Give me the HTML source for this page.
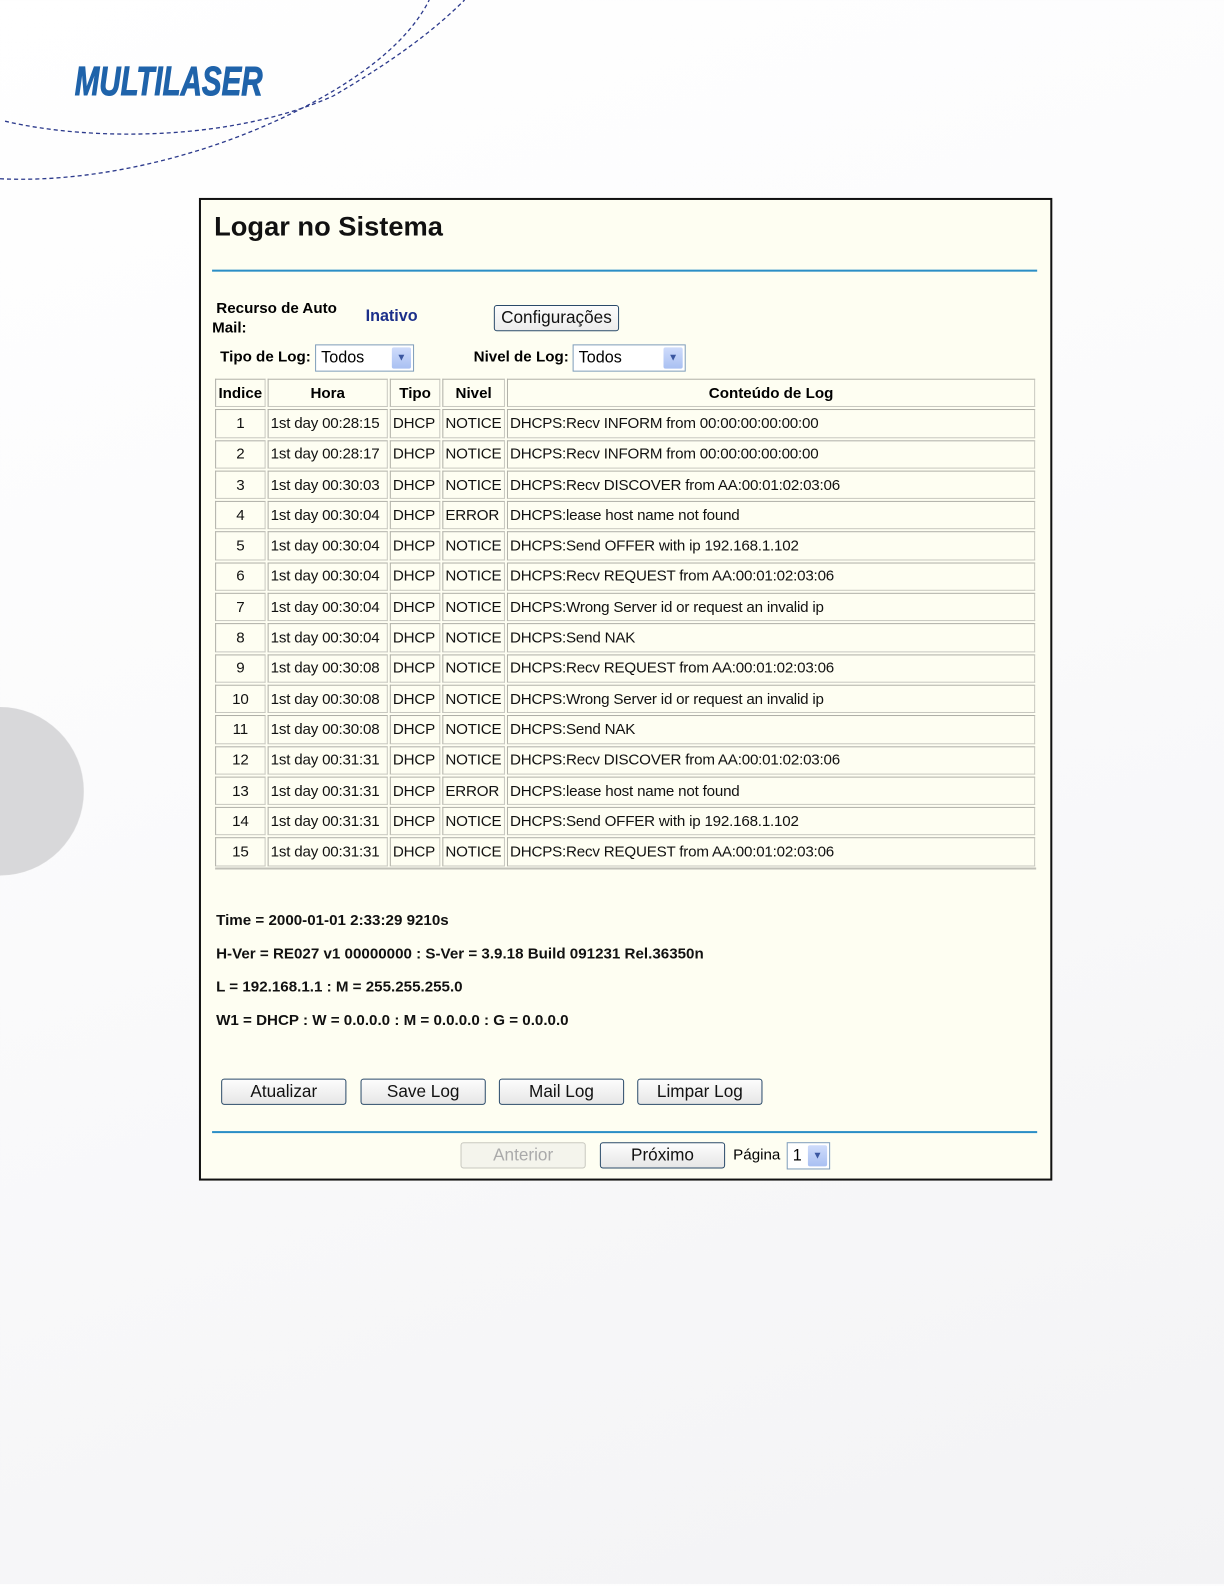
<!DOCTYPE html>
<html><head><meta charset="utf-8"><style>
*{margin:0;padding:0;box-sizing:border-box}
body{width:1224px;height:1584px;position:relative;overflow:hidden;font-family:"Liberation Sans",Arial,sans-serif;background:linear-gradient(160deg,#ffffff 0%,#fbfbfc 40%,#f3f3f5 100%)}
#w{position:absolute;left:0;top:0;width:1212px;height:1570px;transform:scale(1.0099);transform-origin:0 0}
.abs{position:absolute}
.panel{left:197px;top:196px;width:845px;height:973px;border:2px solid #111;background:#fefef2}
.hr{height:2px;background:#2b8ec6;left:210px;width:817px}
.btn{position:absolute;height:26px;border:1px solid #2a4a6a;border-radius:3px;background:linear-gradient(#fdfdfd,#e6e6e6);font-size:17px;text-align:center;line-height:24px;color:#111}
.sel{position:absolute;height:27px;border:1px solid #7f9db9;background:#fff;font-size:16px;line-height:25px;padding-left:5px}
.sel i{position:absolute;right:2px;top:2px;width:19px;height:21px;background:linear-gradient(#cfdcfb,#a9c0f2);border-radius:2px;color:#3b57a0;font-style:normal;font-size:10px;text-align:center;line-height:21px}
table{position:absolute;left:211px;top:373px;width:816px;border-collapse:separate;border-spacing:2px;table-layout:fixed;font-size:15px}
td{height:28.3px;border:1px solid #c8c8c0;border-top-color:#b0b0a8;border-left-color:#b0b0a8;padding:0 2px;white-space:nowrap;color:#111;letter-spacing:-0.2px}
th{height:28.3px;border:1px solid #c8c8c0;border-top-color:#b0b0a8;border-left-color:#b0b0a8;font-size:15px;font-weight:bold}
td.c{text-align:center}
.info{left:214px;font-size:15px;font-weight:bold;color:#111}
</style></head><body><div id="w">
<svg class="abs" style="left:0;top:0" width="480" height="200">
<path d="M5 120 C90 140 230 140 330 95 C390 60 430 30 460 0" fill="none" stroke="#2c3a8c" stroke-width="1.3" stroke-dasharray="4 3"/>
<path d="M0 177 C100 182 230 150 330 90 C380 60 410 30 425 0" fill="none" stroke="#2c3a8c" stroke-width="1.3" stroke-dasharray="4 3"/>
<text x="74" y="94" font-family="Liberation Sans" font-weight="bold" font-style="italic" font-size="40" fill="#1f63aa" stroke="#1f63aa" stroke-width="1" textLength="186" lengthAdjust="spacingAndGlyphs">MULTILASER</text>
</svg>
<div class="abs" style="left:-84px;top:700px;width:167px;height:167px;border-radius:50%;background:#d8d8da"></div>
<div class="abs panel"></div>
<div class="abs" style="left:212px;top:209px;font-size:27px;font-weight:bold;color:#111">Logar no Sistema</div>
<div class="abs hr" style="top:267px"></div>
<div class="abs" style="left:210px;top:296px;font-size:15px;font-weight:bold;line-height:19px">&nbsp;Recurso de Auto<br>Mail:</div>
<div class="abs" style="left:362px;top:305px;font-size:16px;font-weight:bold;color:#1b2f8a">Inativo</div>
<div class="btn" style="left:489px;top:302px;width:124px;background:linear-gradient(#fcfcfc,#ececec)">Configurações</div>
<div class="abs" style="left:218px;top:345px;font-size:15px;font-weight:bold">Tipo de Log:</div>
<div class="sel" style="left:312px;top:341px;width:98px">Todos<i>&#9660;</i></div>
<div class="abs" style="left:469px;top:345px;font-size:15px;font-weight:bold">Nivel de Log:</div>
<div class="sel" style="left:567px;top:341px;width:112px">Todos<i>&#9660;</i></div>
<table>
<colgroup><col style="width:50px"><col style="width:119px"><col style="width:50px"><col style="width:62px"><col></colgroup>
<tr><th>Indice</th><th>Hora</th><th>Tipo</th><th>Nivel</th><th>Conteúdo de Log</th></tr>
<tr><td class="c">1</td><td>1st day 00:28:15</td><td>DHCP</td><td>NOTICE</td><td>DHCPS:Recv INFORM from 00:00:00:00:00:00</td></tr>
<tr><td class="c">2</td><td>1st day 00:28:17</td><td>DHCP</td><td>NOTICE</td><td>DHCPS:Recv INFORM from 00:00:00:00:00:00</td></tr>
<tr><td class="c">3</td><td>1st day 00:30:03</td><td>DHCP</td><td>NOTICE</td><td>DHCPS:Recv DISCOVER from AA:00:01:02:03:06</td></tr>
<tr><td class="c">4</td><td>1st day 00:30:04</td><td>DHCP</td><td>ERROR</td><td>DHCPS:lease host name not found</td></tr>
<tr><td class="c">5</td><td>1st day 00:30:04</td><td>DHCP</td><td>NOTICE</td><td>DHCPS:Send OFFER with ip 192.168.1.102</td></tr>
<tr><td class="c">6</td><td>1st day 00:30:04</td><td>DHCP</td><td>NOTICE</td><td>DHCPS:Recv REQUEST from AA:00:01:02:03:06</td></tr>
<tr><td class="c">7</td><td>1st day 00:30:04</td><td>DHCP</td><td>NOTICE</td><td>DHCPS:Wrong Server id or request an invalid ip</td></tr>
<tr><td class="c">8</td><td>1st day 00:30:04</td><td>DHCP</td><td>NOTICE</td><td>DHCPS:Send NAK</td></tr>
<tr><td class="c">9</td><td>1st day 00:30:08</td><td>DHCP</td><td>NOTICE</td><td>DHCPS:Recv REQUEST from AA:00:01:02:03:06</td></tr>
<tr><td class="c">10</td><td>1st day 00:30:08</td><td>DHCP</td><td>NOTICE</td><td>DHCPS:Wrong Server id or request an invalid ip</td></tr>
<tr><td class="c">11</td><td>1st day 00:30:08</td><td>DHCP</td><td>NOTICE</td><td>DHCPS:Send NAK</td></tr>
<tr><td class="c">12</td><td>1st day 00:31:31</td><td>DHCP</td><td>NOTICE</td><td>DHCPS:Recv DISCOVER from AA:00:01:02:03:06</td></tr>
<tr><td class="c">13</td><td>1st day 00:31:31</td><td>DHCP</td><td>ERROR</td><td>DHCPS:lease host name not found</td></tr>
<tr><td class="c">14</td><td>1st day 00:31:31</td><td>DHCP</td><td>NOTICE</td><td>DHCPS:Send OFFER with ip 192.168.1.102</td></tr>
<tr><td class="c">15</td><td>1st day 00:31:31</td><td>DHCP</td><td>NOTICE</td><td>DHCPS:Recv REQUEST from AA:00:01:02:03:06</td></tr>
</table>
<div class="abs" style="left:213px;top:859px;width:813px;height:2px;background:#c0c0b8"></div>
<div class="abs info" style="top:903px">Time = 2000-01-01 2:33:29 9210s</div>
<div class="abs info" style="top:936px">H-Ver = RE027 v1 00000000 : S-Ver = 3.9.18 Build 091231 Rel.36350n</div>
<div class="abs info" style="top:969px">L = 192.168.1.1 : M = 255.255.255.0</div>
<div class="abs info" style="top:1002px">W1 = DHCP : W = 0.0.0.0 : M = 0.0.0.0 : G = 0.0.0.0</div>
<div class="btn" style="left:219px;top:1068px;width:124px">Atualizar</div>
<div class="btn" style="left:357px;top:1068px;width:124px">Save Log</div>
<div class="btn" style="left:494px;top:1068px;width:124px">Mail Log</div>
<div class="btn" style="left:631px;top:1068px;width:124px">Limpar Log</div>
<div class="abs hr" style="top:1120px"></div>
<div class="btn" style="left:456px;top:1131px;width:124px;border-color:#c8c8c0;color:#aaa;background:#f4f4ec">Anterior</div>
<div class="btn" style="left:594px;top:1131px;width:124px">Próximo</div>
<div class="abs" style="left:726px;top:1135px;font-size:15px">Página</div>
<div class="sel" style="left:779px;top:1131px;width:43px;height:27px">1<i>&#9660;</i></div>
</div></body></html>
